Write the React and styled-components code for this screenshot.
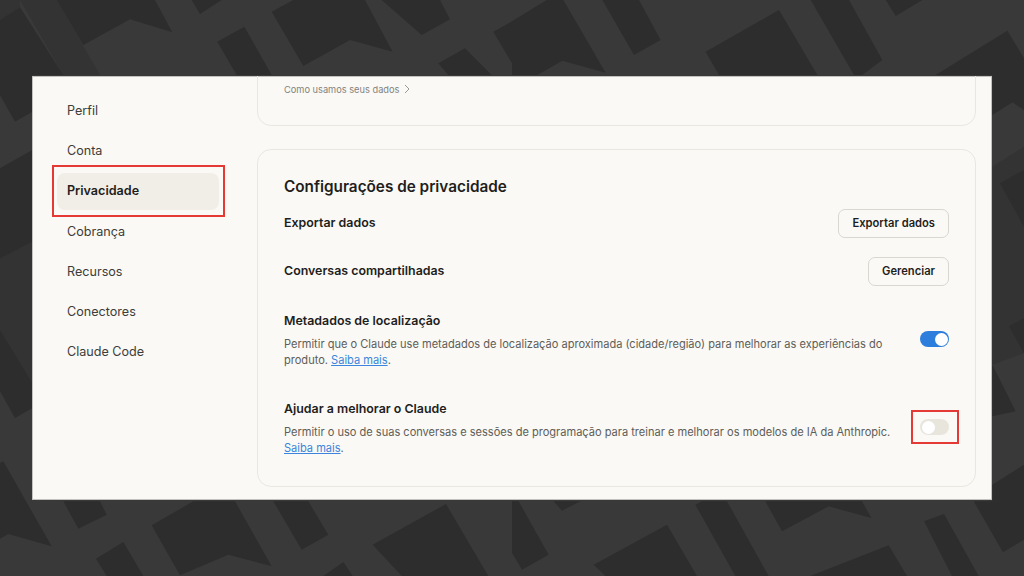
import styled, { createGlobalStyle } from "styled-components"

const GlobalStyle = createGlobalStyle`
html, body {
  margin: 0;
  padding: 0;
  background: #393939;
}
* {
  box-sizing: border-box;
}
`

// shapes of the backdrop, traced at 3x and scaled down by the viewBox
const midShapes = [
  "0,0 60,0 60,22 0,60",
  "60,0 170,0 300,225 190,225",
  "0,775 97,725 97,1149 0,989",
  "2977,500 3072,440 3072,1059 2977,1094",
]

const darkShapes = [
  "170,0 250,135 390,58 517,97 465,0",
  "575,0 600,42 665,0",
  "652,125 733,80 815,225 710,225",
  "815,35 880,0 1095,0 1178,155 1050,120 910,198",
  "1145,0 1265,105 1350,58 1320,0",
  "1315,190 1395,145 1475,225 1345,225",
  "1480,95 1536,64 1640,0 1690,0 1817,218 1687,182 1612,225 1536,225 1536,190",
  "1807,0 1902,165 1982,120 1917,0",
  "2117,155 2337,30 2452,225 2157,225",
  "2432,0 2562,225 2587,225 2647,180 2547,0",
  "2657,0 2687,48 2767,0",
  "2807,225 3022,92 3072,175 3072,225",
  "2977,225 3072,225 3072,330 3037,307 2977,345",
  "3000,550 3072,510 3072,680",
  "3027,979 3072,954 3072,1059",
  "2977,1094 3047,1234 2977,1249",
  "2977,1454 3072,1394 3072,1504 2977,1504",
  "0,60 60,22 190,225 97,225 97,335 45,365 0,285",
  "0,505 97,450 97,725 0,775",
  "0,989 97,1149 97,1224 45,1254 0,1174",
  "0,1389 10,1384 155,1639 25,1602 0,1616",
  "190,1504 235,1586 320,1544 300,1504",
  "455,1576 580,1504 705,1504 815,1699 685,1664 540,1726",
  "925,1504 985,1604 905,1649 820,1504",
  "1118,1634 1338,1512 1465,1728 1205,1728",
  "288,1676 370,1626 430,1728 320,1728",
  "970,1728 1030,1686 1058,1728",
  "1536,1504 1556,1504 1646,1664 1566,1709 1536,1659",
  "1661,1504 1686,1532 1741,1504",
  "1781,1694 2001,1574 2091,1728 1816,1728",
  "2086,1514 2106,1504 2181,1504 2306,1728 2206,1728",
  "2296,1504 2346,1594 2486,1519 2614,1554 2586,1504",
  "2772,1564 2832,1542 2936,1728 2856,1728",
  "2921,1504 3009,1657 3072,1619 3072,1504",
  "2431,1728 2666,1636 2721,1728",
]

const Backdrop = () => (
  <BackdropSvg viewBox="0 0 3072 1728" aria-hidden="true">
    {midShapes.map((points) => (
      <polygon key={points} points={points} fill="#333333" />
    ))}
    {darkShapes.map((points) => (
      <polygon key={points} points={points} fill="#2d2d2d" />
    ))}
  </BackdropSvg>
)

const ChevronRight = () => (
  <ChevronIcon viewBox="0 0 10 10" aria-hidden="true">
    <path d="M3 1l4 4-4 4" fill="none" stroke="#8f8e89" strokeWidth="0.9" />
  </ChevronIcon>
)

const navItems = ["Perfil", "Conta", "Privacidade", "Cobrança", "Recursos", "Conectores", "Claude Code"]

const App = () => {
  return (
    <Page>
      <GlobalStyle />
      <Backdrop />
      <Window>
        <Sidebar>
          {navItems.map((item) => (
            <NavItem key={item} $active={item === "Privacidade"}>
              {item}
            </NavItem>
          ))}
        </Sidebar>
        <Main>
          <ScrolledCard>
            <SmallLink>
              Como usamos seus dados
              <ChevronRight />
            </SmallLink>
          </ScrolledCard>
          <Card>
            <CardTitle>Configurações de privacidade</CardTitle>
            <ActionRow>
              <RowTitle>Exportar dados</RowTitle>
              <Button>Exportar dados</Button>
            </ActionRow>
            <ActionRow>
              <RowTitle>Conversas compartilhadas</RowTitle>
              <Button>Gerenciar</Button>
            </ActionRow>
            <ToggleRow>
              <ToggleText>
                <RowTitle>Metadados de localização</RowTitle>
                <Description>
                  Permitir que o Claude use metadados de localização aproximada (cidade/região) para melhorar as
                  experiências do produto. <MoreLink>Saiba mais</MoreLink>.
                </Description>
              </ToggleText>
              <Toggle $on />
            </ToggleRow>
            <ToggleRow>
              <ToggleText>
                <RowTitle>Ajudar a melhorar o Claude</RowTitle>
                <Description>
                  Permitir o uso de suas conversas e sessões de programação para treinar e melhorar os modelos de IA
                  da Anthropic. <MoreLink>Saiba mais</MoreLink>.
                </Description>
              </ToggleText>
              <Toggle $framed />
            </ToggleRow>
          </Card>
        </Main>
      </Window>
    </Page>
  )
}

const Page = styled.div`
position: relative;
width: 1024px;
height: 576px;
padding: 76px 32px;
overflow: hidden;
font-family: Inter, "Open Sans", sans-serif;
`
const BackdropSvg = styled.svg`
position: absolute;
top: 0;
left: 0;
width: 1024px;
height: 576px;
`
const Window = styled.div`
position: relative;
display: flex;
width: 960px;
height: 424px;
background: #faf9f5;
box-shadow: inset 0 0 0 1px rgba(90, 90, 90, 0.35);
`
const Sidebar = styled.nav`
display: flex;
flex: none;
flex-direction: column;
gap: 3.25px;
width: 225px;
padding: 16px 38px 0 25px;
`
const NavItem = styled.div`
position: relative;
height: 37px;
padding: 0 0 0.5px 10px;
display: flex;
align-items: center;
border-radius: 8px;
font-size: 12.6px;
font-weight: ${(props) => (props.$active ? 600 : 400)};
color: ${(props) => (props.$active ? "#1f1e1d" : "#3d3d3a")};
background: ${(props) => (props.$active ? "#f0eee6" : "transparent")};

${(props) =>
  props.$active &&
  `
  &::after {
    content: "";
    position: absolute;
    inset: -8px -6px -7px -5px;
    border: 2px solid #e53935;
  }
  `}
`
const Main = styled.main`
flex: 1;
min-width: 0;
height: 424px;
overflow: hidden;
padding-right: 16.5px;
`
const Card = styled.section`
height: 338px;
margin-top: 23px;
padding: 27px 25.5px 0 26px;
border: 1px solid #e9e7e0;
border-radius: 14px;
`
const ScrolledCard = styled.section`
height: 89.5px;
margin-top: -40px;
padding: 45px 26px 0;
border: 1px solid #e9e7e0;
border-radius: 14px;
`
const SmallLink = styled.div`
display: flex;
align-items: center;
gap: 3px;
height: 14px;
font-size: 9.25px;
color: #83827d;
`
const ChevronIcon = styled.svg`
width: 10px;
height: 10px;
`
const CardTitle = styled.h2`
margin: 0 0 2.5px;
height: 20px;
line-height: 20px;
font-size: 15.3px;
font-weight: 600;
color: #1f1e1d;
`
const ActionRow = styled.div`
display: flex;
align-items: center;
justify-content: space-between;
height: 48px;
`
const RowTitle = styled.div`
font-size: 12.4px;
line-height: 16px;
font-weight: 600;
color: #1f1e1d;
`
const Button = styled.button`
height: 29px;
padding: 0 13px;
font-family: inherit;
font-size: 11.2px;
font-weight: 600;
color: #1f1e1d;
background: transparent;
border: 1px solid #d9d7d0;
border-radius: 7px;
`
const ToggleRow = styled.div`
display: flex;
justify-content: space-between;
align-items: center;
gap: 20px;
height: 88px;
`
const ToggleText = styled.div`
padding-top: 3px;
`
const Description = styled.p`
margin: 8px 0 0;
font-size: 11.05px;
line-height: 15.8px;
color: #5e5d59;
`
const MoreLink = styled.a`
color: #3b86dc;
text-decoration: underline;
`
const Toggle = styled.div`
position: relative;
flex: none;
width: 29px;
height: 16px;
border-radius: 8px;
background: ${(props) => (props.$on ? "#2c7ddc" : "#e8e6dc")};

&::before {
  content: "";
  position: absolute;
  top: 1.5px;
  left: ${(props) => (props.$on ? "14.8px" : "1.5px")};
  width: 13px;
  height: 13px;
  border-radius: 50%;
  background: #fff;
}

${(props) =>
  props.$framed &&
  `
  &::after {
    content: "";
    position: absolute;
    inset: -9px -10px -9px -9px;
    border: 2px solid #e53935;
  }
  `}
`

export default App
